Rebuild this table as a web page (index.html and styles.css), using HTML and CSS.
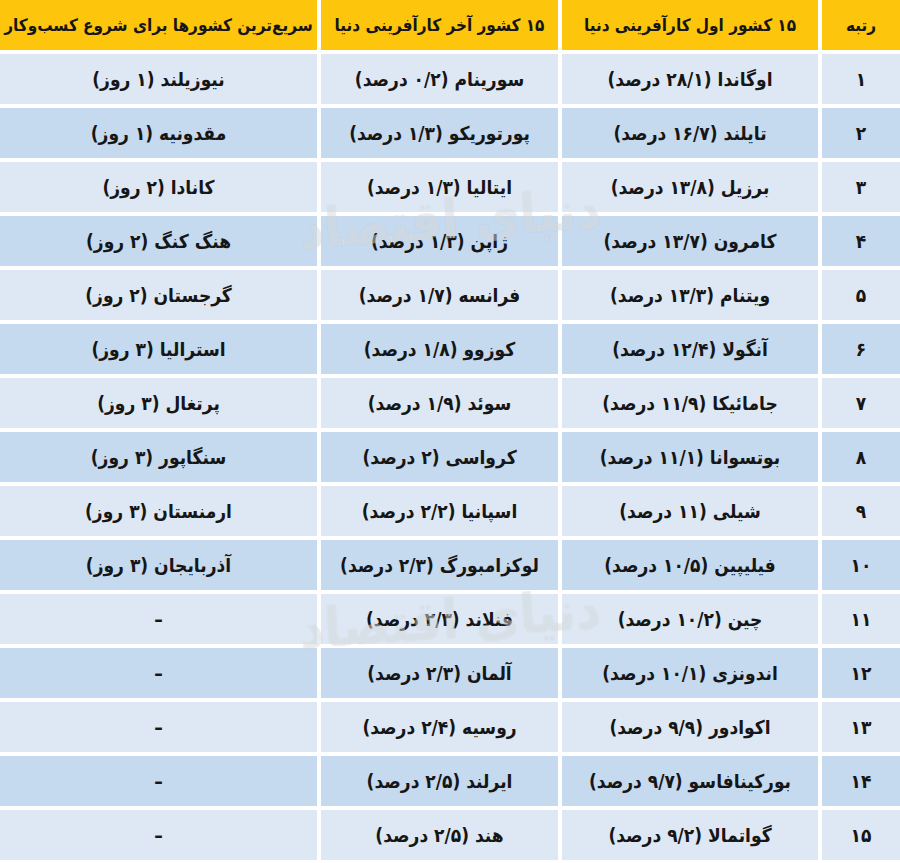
FILE: index.html
```html
<!DOCTYPE html>
<html lang="fa" dir="rtl">
<head>
<meta charset="utf-8">
<title>کارآفرینی</title>
<link rel="stylesheet" href="styles.css">
</head>
<body>
<div class="wrap">
<div class="table">
  <div class="cell head">رتبه</div>
  <div class="cell head">۱۵ کشور اول کارآفرینی دنیا</div>
  <div class="cell head">۱۵ کشور آخر کارآفرینی دنیا</div>
  <div class="cell head">سریع‌ترین کشورها برای شروع کسب‌وکار</div>

  <div class="cell light">۱</div><div class="cell light">اوگاندا (۲۸/۱ درصد)</div><div class="cell light">سورینام (۰/۲ درصد)</div><div class="cell light">نیوزیلند (۱ روز)</div>
  <div class="cell dark">۲</div><div class="cell dark">تایلند (۱۶/۷ درصد)</div><div class="cell dark">پورتوریکو (۱/۳ درصد)</div><div class="cell dark">مقدونیه (۱ روز)</div>
  <div class="cell light">۳</div><div class="cell light">برزیل (۱۳/۸ درصد)</div><div class="cell light">ایتالیا (۱/۳ درصد)</div><div class="cell light">کانادا (۲ روز)</div>
  <div class="cell dark">۴</div><div class="cell dark">کامرون (۱۳/۷ درصد)</div><div class="cell dark">ژاپن (۱/۳ درصد)</div><div class="cell dark">هنگ کنگ (۲ روز)</div>
  <div class="cell light">۵</div><div class="cell light">ویتنام (۱۳/۳ درصد)</div><div class="cell light">فرانسه (۱/۷ درصد)</div><div class="cell light">گرجستان (۲ روز)</div>
  <div class="cell dark">۶</div><div class="cell dark">آنگولا (۱۲/۴ درصد)</div><div class="cell dark">کوزوو (۱/۸ درصد)</div><div class="cell dark">استرالیا (۳ روز)</div>
  <div class="cell light">۷</div><div class="cell light">جامائیکا (۱۱/۹ درصد)</div><div class="cell light">سوئد (۱/۹ درصد)</div><div class="cell light">پرتغال (۳ روز)</div>
  <div class="cell dark">۸</div><div class="cell dark">بوتسوانا (۱۱/۱ درصد)</div><div class="cell dark">کرواسی (۲ درصد)</div><div class="cell dark">سنگاپور (۳ روز)</div>
  <div class="cell light">۹</div><div class="cell light">شیلی (۱۱ درصد)</div><div class="cell light">اسپانیا (۲/۲ درصد)</div><div class="cell light">ارمنستان (۳ روز)</div>
  <div class="cell dark">۱۰</div><div class="cell dark">فیلیپین (۱۰/۵ درصد)</div><div class="cell dark">لوکزامبورگ (۲/۳ درصد)</div><div class="cell dark">آذربایجان (۳ روز)</div>
  <div class="cell light">۱۱</div><div class="cell light">چین (۱۰/۲ درصد)</div><div class="cell light">فنلاند (۲/۳ درصد)</div><div class="cell light">–</div>
  <div class="cell dark">۱۲</div><div class="cell dark">اندونزی (۱۰/۱ درصد)</div><div class="cell dark">آلمان (۲/۳ درصد)</div><div class="cell dark">–</div>
  <div class="cell light">۱۳</div><div class="cell light">اکوادور (۹/۹ درصد)</div><div class="cell light">روسیه (۲/۴ درصد)</div><div class="cell light">–</div>
  <div class="cell dark">۱۴</div><div class="cell dark">بورکینافاسو (۹/۷ درصد)</div><div class="cell dark">ایرلند (۲/۵ درصد)</div><div class="cell dark">–</div>
  <div class="cell light">۱۵</div><div class="cell light">گواتمالا (۹/۲ درصد)</div><div class="cell light">هند (۲/۵ درصد)</div><div class="cell light">–</div>
</div>
<div class="mark mark-top">دنیای اقتصاد</div>
<div class="mark mark-bottom">دنیای اقتصاد</div>
</div>
</body>
</html>
```
FILE: styles.css
```css
html, body {
  margin: 0;
  padding: 0;
  background: #ffffff;
  width: 900px;
  height: 863px;
  overflow: hidden;
}
body {
  font-family: "DejaVu Sans Condensed", "DejaVu Sans", sans-serif;
  color: #161616;
}
.wrap {
  position: relative;
  width: 900px;
  height: 863px;
}
.table {
  direction: rtl;
  display: grid;
  grid-template-columns: 78px 256px 237px 317px;
  grid-template-rows: 50px;
  grid-auto-rows: 50px;
  gap: 4px;
  width: 900px;
}
.cell {
  display: flex;
  align-items: center;
  justify-content: center;
  font-size: 19px;
  font-weight: bold;
  white-space: nowrap;
}
.head {
  background: #fdc60c;
  font-size: 17px;
}
.light {
  background: #dee8f4;
}
.dark {
  background: #c5d9ef;
}
.mark {
  position: absolute;
  left: 280px;
  width: 340px;
  text-align: center;
  white-space: nowrap;
  font-family: "DejaVu Sans Condensed", "DejaVu Sans", sans-serif;
  font-size: 54px;
  font-weight: bold;
  color: rgba(255, 255, 255, 0.35);
  text-shadow: 0 0 1px rgba(120, 130, 140, 0.25);
  pointer-events: none;
  transform: rotate(-4deg);
}
.mark-top {
  top: 188px;
}
.mark-bottom {
  top: 588px;
}
```
